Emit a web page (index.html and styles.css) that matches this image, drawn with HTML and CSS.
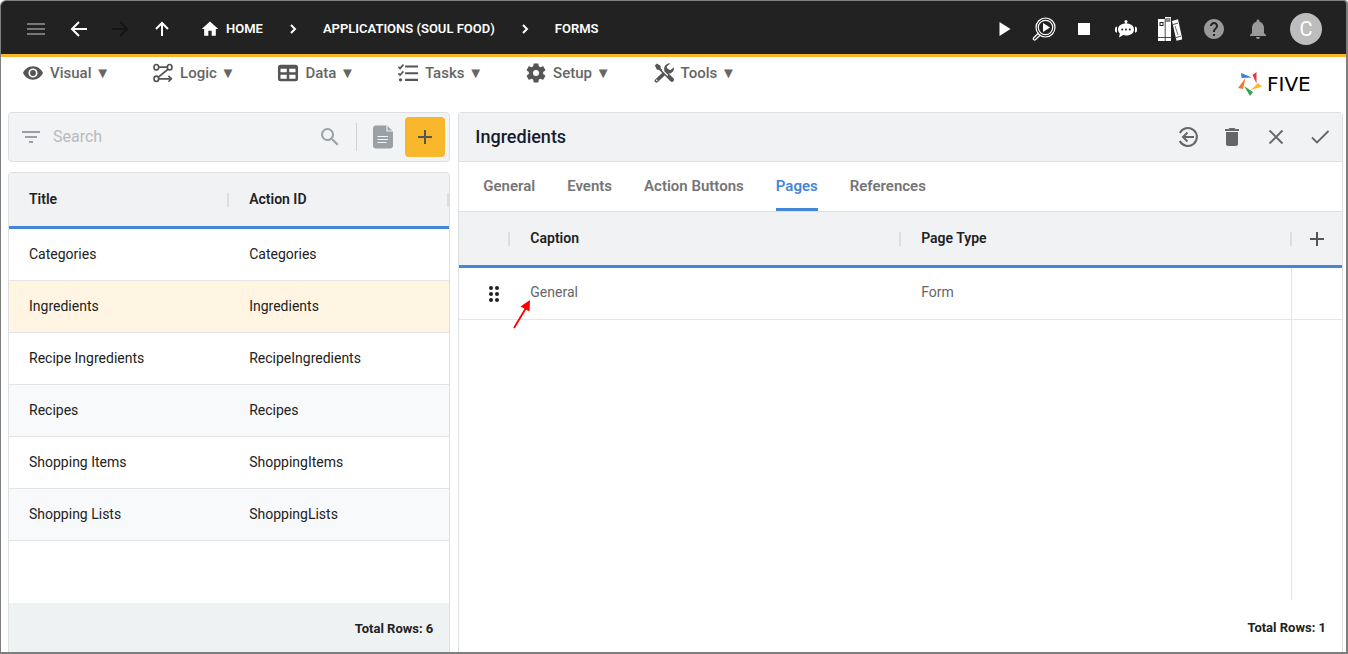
FILE: index.html
```html
<!DOCTYPE html>
<html lang="en">
<head>
<meta charset="utf-8">
<meta name="viewport" content="width=device-width, initial-scale=1">
<title>Five - Forms</title>
<link rel="stylesheet" href="styles.css">
</head>
<body>
<div class="window">
  <header class="topbar">
    <div class="nav-buttons">
      <button class="icon-btn muted" aria-label="Menu"><svg viewBox="0 0 24 24"><path d="M3 6h18v2H3zM3 11h18v2H3zM3 16h18v2H3z"/></svg></button>
      <button class="icon-btn" aria-label="Back"><svg viewBox="0 0 24 24"><path d="M21 12H6M13 5l-7 7 7 7" class="line"/></svg></button>
      <button class="icon-btn disabled" aria-label="Forward" disabled><svg viewBox="0 0 24 24"><path d="M4 12h15M12 5l7 7-7 7" class="line"/></svg></button>
      <button class="icon-btn" aria-label="Up"><svg viewBox="0 0 24 24"><path d="M12 19V6M6 12l6-6 6 6" class="line"/></svg></button>
    </div>
    <nav class="crumbs" aria-label="Breadcrumb">
      <a href="#" class="crumb-home"><svg viewBox="0 0 24 24" width="20" height="20"><path d="M10 20v-6h4v6h5v-8h3L12 3 2 12h3v8z"/></svg>HOME</a>
      <svg class="chevron" viewBox="0 0 8 12"><path d="M2 2l4 4-4 4" class="line"/></svg>
      <a href="#">APPLICATIONS (SOUL FOOD)</a>
      <svg class="chevron" viewBox="0 0 8 12"><path d="M2 2l4 4-4 4" class="line"/></svg>
      <a href="#">FORMS</a>
    </nav>
    <div class="actions">
      <div class="run-actions">
        <button class="icon-btn" aria-label="Run"><svg viewBox="0 0 24 24"><path d="M7.500 5v14l11-7z"/></svg></button>
        <button class="icon-btn" aria-label="Inspect"><svg viewBox="0 0 24 24"><circle cx="13.500" cy="10.500" r="9.500" class="thin"/><circle cx="13.500" cy="10.500" r="7.200" class="thin"/><path d="M11 6v9l7-4.500z"/><path d="M6.500 16L1.500 21c-.8 1.200.8 2.600 1.900 1.700L8.300 18" class="thin"/></svg></button>
        <button class="icon-btn" aria-label="Stop"><svg viewBox="0 0 24 24"><path d="M6 6h12v12H6z"/></svg></button>
      </div>
      <div class="help-actions">
        <button class="icon-btn" aria-label="Assistant"><svg viewBox="0 0 24 24"><circle cx="12" cy="4.500" r="1.500"/><path d="M11.300 5h1.400v3h-1.400z"/><path d="M12 6.500c5 0 8 2.500 8 6s-3 6-8 6c-1 0-2-.1-2.800-.4L5 20.500l.8-4C4.600 15.400 4 14 4 12.500c0-3.500 3-6 8-6z"/><path d="M3 9.500C1.200 9.800 1 11 1 12.700s.3 2.600 2 3zM21 9.500c1.800.3 2 1.500 2 3.200s-.3 2.600-2 3z"/><g fill="#222"><circle cx="8.200" cy="12.500" r="1"/><circle cx="12" cy="12.500" r="1"/><circle cx="15.800" cy="12.500" r="1"/></g></svg></button>
        <button class="icon-btn" aria-label="Library"><svg viewBox="0 0 24 24"><path d="M0 2h7v22H0z"/><path d="M1.500 5h4v4h-4z" fill="#222"/><path d="M2.500 6h2v2h-2z"/><path d="M7 0h6v24H7z"/><path d="M7.500 1h5v4h-5z" fill="#888"/><path d="M14 4l6-1.700 4.400 20-5.900 1.500z"/><path d="M0 20.500h13M7.200 2v22M15 7.500l5-1.300M18 20.500l5-1.300" stroke="#222" stroke-width=".8"/><path d="M17 9l3 9" stroke="#777"/></svg></button>
        <button class="icon-btn grey" aria-label="Help"><svg viewBox="0 0 24 24"><path d="M12 2C6.480 2 2 6.480 2 12s4.480 10 10 10 10-4.480 10-10S17.520 2 12 2zm1 17h-2v-2h2v2zm2.070-7.750l-.9.920C13.450 12.900 13 13.500 13 15h-2v-.5c0-1.100.45-2.100 1.170-2.830l1.240-1.260c.37-.36.59-.86.59-1.410 0-1.100-.9-2-2-2s-2 .9-2 2H8c0-2.210 1.790-4 4-4s4 1.790 4 4c0 .88-.36 1.680-.93 2.250z"/></svg></button>
        <button class="icon-btn grey" aria-label="Notifications"><svg viewBox="0 0 24 24"><path d="M12 22c1.100 0 2-.9 2-2h-4c0 1.100.9 2 2 2zm6-6v-5c0-3.070-1.640-5.640-4.500-6.320V4c0-.83-.67-1.500-1.500-1.500s-1.500.67-1.500 1.500v.68C7.630 5.360 6 7.920 6 11v5l-2 2v1h16v-1z"/></svg></button>
        <button class="avatar" aria-label="Account">C</button>
      </div>
    </div>
  </header>

  <div class="menubar">
    <nav class="menus" aria-label="Main">
      <button class="menu"><svg viewBox="0 0 24 24"><path d="M12 4C6.500 4 2 7.500 0 12c2 4.500 6.500 8 12 8s10-3.500 12-8c-2-4.500-6.500-8-12-8zm0 13.500a5.500 5.500 0 110-11 5.500 5.500 0 010 11zm0-9a3.500 3.500 0 100 7 3.500 3.500 0 000-7z"/></svg><span>Visual ▼</span></button>
      <button class="menu"><svg viewBox="0 0 24 24"><g fill="none" stroke="#555" stroke-width="2"><ellipse cx="4" cy="5" rx="2.800" ry="3.200"/><ellipse cx="20" cy="5" rx="2.800" ry="3.200"/><ellipse cx="4" cy="19" rx="2.800" ry="3.200"/><path d="M7 5h10M18 7.500L6.500 17M7 19h15M18.500 15.500L22 19l-3.500 3.500"/></g></svg><span>Logic ▼</span></button>
      <button class="menu"><svg viewBox="0 0 24 24"><path fill-rule="evenodd" d="M3 2h18a3 3 0 013 3v14a3 3 0 01-3 3H3a3 3 0 01-3-3V5a3 3 0 013-3zm0 5v4h7.500V7zm10.500 0v4H21V7zM3 14v5h7.500v-5zm10.500 0v5H21v-5z"/></svg><span>Data ▼</span></button>
      <button class="menu"><svg viewBox="0 0 24 24"><path d="M8.500 3H24v2.500H8.500zM8.500 11H24v2.500H8.500zM8.500 19H24v2.500H8.500z"/><circle cx="3" cy="20.200" r="2"/><path d="M.5 4.500L2.500 6.500 6.500 2M.5 12.500l2 2L6.500 10" fill="none" stroke="#555" stroke-width="2"/></svg><span>Tasks ▼</span></button>
      <button class="menu"><svg viewBox="2 2 20 20"><path d="M19.140 12.940c.04-.3.060-.61.060-.94s-.02-.64-.07-.94l2.030-1.580c.18-.14.23-.41.120-.61l-1.920-3.320c-.12-.22-.37-.29-.59-.22l-2.390.96c-.5-.38-1.030-.7-1.620-.94L14.400 2.810c-.04-.24-.24-.41-.48-.41h-3.840c-.24 0-.43.17-.47.410L9.250 5.350c-.59.24-1.130.57-1.620.94l-2.390-.96c-.22-.08-.47 0-.59.22L2.740 8.870c-.12.21-.08.470.120.610l2.030 1.580c-.05.3-.09.630-.09.940s.02.640.070.940l-2.030 1.580c-.18.140-.23.410-.12.610l1.920 3.320c.12.220.37.290.59.220l2.390-.96c.5.380 1.030.7 1.620.94l.36 2.540c.05.240.24.410.480.410h3.840c.24 0 .44-.17.470-.41l.36-2.540c.59-.24 1.130-.56 1.620-.94l2.390.96c.22.080.47 0 .59-.22l1.920-3.320c.12-.22.070-.47-.12-.61zM12 15a3 3 0 110-6 3 3 0 010 6z"/></svg><span>Setup ▼</span></button>
      <button class="menu"><svg viewBox="0 0 24 24"><path d="M1 3l2.500-2.500L8 3.500v2.700l5 5-2 2-5-5H3.500z"/><path d="M15.500 14l6 6" stroke="#555" stroke-width="5" stroke-linecap="round"/><path d="M3 21.300L16 9" stroke="#555" stroke-width="4.500" stroke-linecap="round"/><path d="M19.500.5a6.500 6.500 0 00-7 8.500l4 3.800A6.500 6.500 0 0023.800 5L20 8.500l-4-.7-.7-3.500z"/><path d="M10 8.500l6.500 6.500" stroke="#fff" stroke-width="1.500"/><circle cx="3.300" cy="20.800" r="1" fill="#fff"/></svg><span>Tools ▼</span></button>
    </nav>
    <div class="brand">
      <svg viewBox="0 0 24 24" width="24" height="24"><path fill="#3f80d8" d="M3 1l11 4.500L3.500 6z"/><path fill="#e23b3b" d="M18.500 0v11.500L14.500 3z"/><path fill="#f8b62a" d="M20 11l4 3.500-11 3.500z"/><path fill="#35a853" d="M6 14l9 6-3 4z"/><path fill="#f4792b" d="M7.500 6L5 17l-5-1z"/></svg>
      <span>FIVE</span>
    </div>
  </div>

  <main class="content">
    <section class="list-side">
      <div class="searchbar">
        <button class="icon-btn slate" aria-label="Filter"><svg viewBox="0 0 24 24"><path d="M3 6h18v2H3zM6 11h12v2H6zM10 16h4v2h-4z"/></svg></button>
        <input type="search" placeholder="Search" aria-label="Search">
        <button class="icon-btn slate" aria-label="Search"><svg viewBox="0 0 24 24"><path d="M15.500 14h-.79l-.28-.27A6.470 6.470 0 0016 9.500 6.500 6.500 0 109.500 16c1.610 0 3.090-.59 4.230-1.570l.27.28v.79l5 4.990L20.490 19zm-6 0C7.010 14 5 11.990 5 9.500S7.010 5 9.500 5 14 7.010 14 9.500 11.990 14 9.500 14z"/></svg></button>
        <span class="divider"></span>
        <button class="icon-btn slate" aria-label="Document"><svg viewBox="0 0 24 24"><path d="M5 .5h11l6 6V20.500a3 3 0 01-3 3H5a3 3 0 01-3-3v-17a3 3 0 013-3z"/><path d="M16 .5v5.500h6" fill="none" stroke="#f1f3f4" stroke-width="1.200"/><path d="M6.500 11.500h10.500M6.500 14.500h10.500M6.500 17.500h9" stroke="#f1f3f4" stroke-width="1.200"/></svg></button>
        <button class="add-btn" aria-label="Add"><svg viewBox="0 0 24 24"><path d="M19 13h-6v6h-2v-6H5v-2h6V5h2v6h6z"/></svg></button>
      </div>
      <div class="panel list-panel">
        <table class="grid">
          <thead><tr><th class="sep">Title</th><th class="sep">Action ID</th></tr></thead>
          <tbody>
            <tr><td>Categories</td><td>Categories</td></tr>
            <tr class="selected"><td>Ingredients</td><td>Ingredients</td></tr>
            <tr><td>Recipe Ingredients</td><td>RecipeIngredients</td></tr>
            <tr><td>Recipes</td><td>Recipes</td></tr>
            <tr><td>Shopping Items</td><td>ShoppingItems</td></tr>
            <tr><td>Shopping Lists</td><td>ShoppingLists</td></tr>
          </tbody>
        </table>
        <footer class="total shaded">Total Rows: 6</footer>
      </div>
    </section>

    <section class="panel detail">
      <header class="detail-head">
        <h1>Ingredients</h1>
        <div class="detail-actions">
          <button class="icon-btn" aria-label="Return"><svg viewBox="0 0 24 24"><path d="M3.800 8a9 9 0 110 8M18 12H7.500M11.500 7.500L7 12l4.500 4.500" class="line"/></svg></button>
          <button class="icon-btn" aria-label="Delete"><svg viewBox="0 0 24 24"><path d="M6 19c0 1.100.9 2 2 2h8c1.100 0 2-.9 2-2V7H6zM19 4h-3.500l-1-1h-5l-1 1H5v2h14z"/></svg></button>
          <button class="icon-btn" aria-label="Cancel"><svg viewBox="0 0 24 24"><path d="M5.500 5.500l13 13M18.500 5.500l-13 13" class="fine"/></svg></button>
          <button class="icon-btn" aria-label="Save"><svg viewBox="0 0 24 24"><path d="M4 12.500l5 5L20.500 6" class="fine"/></svg></button>
        </div>
      </header>
      <div class="tabs" role="tablist">
        <button role="tab">General</button>
        <button role="tab">Events</button>
        <button role="tab">Action Buttons</button>
        <button role="tab" class="active" aria-selected="true">Pages</button>
        <button role="tab">References</button>
      </div>
      <div class="pages">
        <table class="grid pages-grid">
          <colgroup><col class="col-drag"><col><col><col class="col-add"></colgroup>
          <thead><tr><th class="sep" aria-label="Order"></th><th class="sep">Caption</th><th class="sep">Page Type</th><th class="tool"><button class="icon-btn" aria-label="Add page"><svg viewBox="0 0 24 24"><path d="M19 13h-6v6h-2v-6H5v-2h6V5h2v6h6z"/></svg></button></th></tr></thead>
          <tbody><tr>
            <td class="drag"><svg viewBox="0 0 12 18" width="12" height="18"><g fill="#222"><circle cx="3" cy="3" r="2"/><circle cx="9" cy="3" r="2"/><circle cx="3" cy="9" r="2"/><circle cx="9" cy="9" r="2"/><circle cx="3" cy="15" r="2"/><circle cx="9" cy="15" r="2"/></g></svg></td>
            <td class="caption">General<svg class="pointer" viewBox="0 0 18 30"><path d="M1 29L13 9" stroke="#f00" stroke-width="1.800"/><path d="M17 1L7.500 7.500l9 5z" fill="#f00"/></svg></td>
            <td>Form</td><td></td>
          </tr></tbody>
        </table>
      </div>
      <footer class="total">Total Rows: 1</footer>
    </section>
  </main>
</div>
</body>
</html>
```
FILE: styles.css
```css
* { box-sizing: border-box; }

body {
  margin: 0;
  background: #fff;
  color: #222;
  font: 14px/20px Roboto, "Liberation Sans", sans-serif;
}

button {
  border: 0;
  padding: 0;
  background: none;
  color: inherit;
  font: inherit;
  cursor: pointer;
}

.window {
  display: flex;
  flex-direction: column;
  height: 100vh;
  overflow: hidden;
  border: solid #7c7f7e;
  border-width: 1px 2px 2px 1px;
  border-radius: 6px 4px 0 0;
}

.icon-btn {
  display: inline-flex;
  width: 24px;
  height: 24px;
}

.icon-btn svg { width: 24px; height: 24px; }
svg { flex: none; fill: currentColor; }
.line { fill: none; stroke: currentColor; stroke-width: 2; }
.thin { fill: none; stroke: currentColor; stroke-width: 1.2; }
.fine { fill: none; stroke: currentColor; stroke-width: 1.8; }
.muted { color: #777; }
.disabled { color: #151515; }
.grey { color: #999; }
.slate { color: #9aa0a6; }

/* Top bar */
.topbar {
  display: flex;
  flex: none;
  align-items: center;
  height: 56px;
  padding: 3px 24px 0 23px;
  border-bottom: 3px solid #f8b62a;
  background: #222;
  color: #fff;
}

.nav-buttons { display: flex; gap: 18px; }

.crumbs {
  display: flex;
  align-items: center;
  gap: 26px;
  margin-left: 26px;
  font-size: 13px;
  font-weight: 600;
}

.crumbs a { color: #fff; text-decoration: none; white-space: nowrap; }
.crumb-home { display: flex; align-items: center; gap: 6px; }
.chevron { width: 8px; height: 12px; }

.actions { display: flex; align-items: center; gap: 18px; margin-left: auto; }
.run-actions { display: flex; gap: 16px; }
.help-actions { display: flex; align-items: center; gap: 20px; }

.avatar {
  width: 32px;
  height: 32px;
  border-radius: 50%;
  background: #bdbdbd;
  font-size: 20px;
}

/* Menu bar */
.menubar {
  display: flex;
  flex: none;
  align-items: flex-start;
  justify-content: space-between;
  height: 55px;
  padding: 6px 20px 0 22px;
  color: #666;
}

.menus { display: flex; gap: 43px; }

.menu {
  display: flex;
  align-items: center;
  gap: 7px;
  font-size: 15px;
  font-weight: 500;
  white-space: nowrap;
}

.menu svg { width: 20px; height: 20px; color: #555; }

.brand {
  display: flex;
  align-items: center;
  gap: 5px;
  width: 88px;
  padding-top: 9px;
  color: #000;
  font-family: "DejaVu Sans", sans-serif;
  font-size: 20px;
}

/* Panels */
.content {
  display: grid;
  flex: 1;
  grid-template-columns: 1fr 2fr;
  gap: 8px;
  min-height: 0;
  padding: 0 3px 0 7px;
}

.list-side { display: flex; flex-direction: column; gap: 10px; min-height: 0; }

.searchbar {
  display: flex;
  flex: none;
  align-items: center;
  height: 50px;
  padding: 0 4px 0 10px;
  border: 1px solid #dddfe1;
  border-radius: 4px;
  background: #f1f3f4;
}

.searchbar input {
  flex: 1;
  min-width: 0;
  padding: 0 10px;
  border: 0;
  outline: 0;
  background: none;
  font: 16px/24px Roboto, sans-serif;
}

.searchbar input::placeholder { color: #b8bbbe; }
.divider { width: 1px; height: 28px; margin: 0 14px; background: #d0d3d6; }

.add-btn {
  display: flex;
  align-items: center;
  justify-content: center;
  width: 40px;
  height: 40px;
  margin-left: 10px;
  border-radius: 4px;
  background: #f8b62a;
  color: #555;
}

.add-btn svg { width: 24px; height: 24px; }

.panel {
  display: flex;
  flex-direction: column;
  min-height: 0;
  border: 1px solid #dddfe1;
  border-bottom: 0;
  border-radius: 4px 4px 0 0;
}

.list-panel { flex: 1; }

.grid {
  width: 100%;
  border-spacing: 0;
  table-layout: fixed;
}

.grid th {
  height: 56px;
  padding: 0 20px 2px;
  border-bottom: 3px solid #4487d9;
  background: #f1f2f4;
  font-weight: 600;
  text-align: left;
}

.grid th.sep {
  background: #f1f2f4 linear-gradient(#dcdee0, #dcdee0) no-repeat right center / 2px 14px;
}

.grid td {
  height: 52px;
  padding: 0 20px 2px;
  border-bottom: 1px solid #e3e5e7;
}

.list-panel tbody tr:nth-child(even) { background: #f8f9fb; }
.list-panel tbody tr.selected { background: #fff5e2; }

.total {
  margin-top: auto;
  padding: 18px 16px 14px;
  font-size: 13px;
  font-weight: 700;
  text-align: right;
}

.shaded { padding: 16px 16px 13px; background: #eef2f3; }

/* Detail */
.detail-head {
  display: flex;
  flex: none;
  align-items: center;
  justify-content: space-between;
  height: 49px;
  padding: 0 10px 0 16px;
  border-bottom: 1px solid #dddfe1;
  background: #f1f2f4;
}

.detail-head h1 {
  margin: 0;
  color: #161c2d;
  font-size: 18px;
  font-weight: 500;
}

.detail-actions { display: flex; gap: 20px; color: #666; }

.tabs {
  display: flex;
  flex: none;
  gap: 32px;
  height: 50px;
  padding: 0 24px;
  border-bottom: 1px solid #dddfe1;
}

.tabs button {
  padding-bottom: 2px;
  border: solid transparent;
  border-width: 3px 0;
  color: #757575;
  font-size: 15px;
  font-weight: 600;
}

.tabs .active {
  border-bottom-color: #4487d9;
  border-radius: 2px 2px 0 0;
  color: #4487d9;
}

.pages {
  flex: 1;
  min-height: 0;
  background: linear-gradient(#e3e5e7, #e3e5e7) no-repeat right 50px top / 1px 100%;
}

.col-drag { width: 51px; }
.col-add { width: 50px; }
.pages-grid td { padding-bottom: 3px; color: #666; }
.pages-grid th.tool { padding: 0 13px; }
.tool .icon-btn { vertical-align: middle; color: #555; }
.pages-grid td.drag { padding: 0 0 0 29px; }
.drag svg { display: block; }
.caption { position: relative; }

.pointer {
  position: absolute;
  top: 31px;
  left: 3px;
  width: 18px;
  height: 30px;
}
```
